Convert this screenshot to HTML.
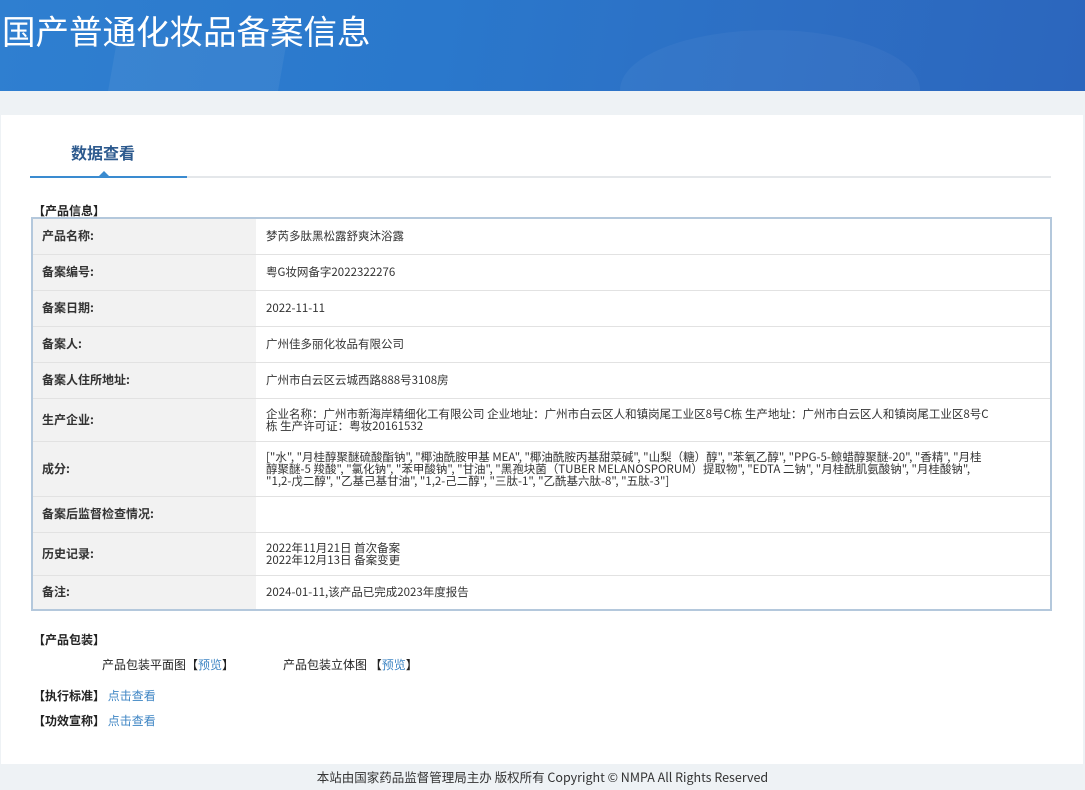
<!DOCTYPE html>
<html><head><meta charset="utf-8"><style>
*{margin:0;padding:0;box-sizing:border-box}
body{width:1085px;height:788px;background:#eef2f5;font-family:"Liberation Sans","Noto Sans CJK SC",sans-serif;position:relative;overflow:hidden;color:#333}
.hd{position:absolute;left:0;top:0;width:1085px;height:91px;background:linear-gradient(100deg,#2f7fd0 0%,#2a78cc 40%,#2d6fc4 70%,#2c66bd 100%);overflow:hidden}
.hd .b1{position:absolute;left:110px;top:40px;width:170px;height:80px;background:rgba(255,255,255,.06);transform:skewX(-10deg)}
.hd .b2{position:absolute;left:620px;top:30px;width:300px;height:120px;border-radius:50%;background:rgba(255,255,255,.04)}
.hd h1{position:absolute;left:2px;top:5px;font-size:33.5px;font-weight:normal;color:#fff;font-family:"Noto Sans CJK SC",sans-serif}
.main{position:absolute;left:1px;top:115px;width:1082px;height:649px;background:#fff}
.tab{position:absolute;left:71px;top:140px;font-size:16px;font-weight:bold;color:#2d5a8e;font-family:"Noto Sans CJK SC",sans-serif}
.line{position:absolute;left:30px;top:176px;width:1021px;height:2px;background:#e4e7ea}
.line2{position:absolute;left:30px;top:176px;width:157px;height:2px;background:#3a8bd0}
.tri{position:absolute;left:99px;top:171px;width:0;height:0;border-left:5px solid transparent;border-right:5px solid transparent;border-bottom:5px solid #3a8bd0}
.sec{position:absolute;font-size:12px;font-weight:bold;color:#222;font-family:"Noto Sans CJK SC",sans-serif}
.wrap{position:absolute;left:31px;top:217px;width:1021px;border:2px solid #b4c8dc}
table{width:100%;border-collapse:collapse;font-size:11.5px}
td{border-top:1px solid #e2e2e2;vertical-align:middle;line-height:12px;font-family:"Noto Sans CJK SC",sans-serif}
td.l{width:223px;background:#f2f2f2;font-weight:bold;color:#333;padding-left:9px;font-size:12px}
td.v{padding-left:10px;color:#333;padding-right:60px}
a{color:#3f86c4;text-decoration:none}
.t{position:absolute;font-size:12px;color:#222;font-family:"Noto Sans CJK SC",sans-serif}
.ft{position:absolute;left:0;top:764px;width:1085px;height:24px;background:#eef2f5;text-align:center;font-size:12.5px;line-height:26px;color:#333;padding-left:0;font-family:"Noto Sans CJK SC",sans-serif}
</style></head><body>
<div class="hd"><div class="b1"></div><div class="b2"></div><h1>国产普通化妆品备案信息</h1></div>
<div class="main"></div>
<div class="tab">数据查看</div>
<div class="line"></div><div class="line2"></div><div class="tri"></div>
<div class="sec" style="left:33px;top:202px">【产品信息】</div>
<div class="wrap"><table>
<tr style="height:35px"><td class="l" style="border-top:none">产品名称:</td><td class="v" style="border-top:none">梦芮多肽黑松露舒爽沐浴露</td></tr>
<tr style="height:36px"><td class="l">备案编号:</td><td class="v">粤G妆网备字2022322276</td></tr>
<tr style="height:36px"><td class="l">备案日期:</td><td class="v">2022-11-11</td></tr>
<tr style="height:36px"><td class="l">备案人:</td><td class="v">广州佳多丽化妆品有限公司</td></tr>
<tr style="height:36px"><td class="l">备案人住所地址:</td><td class="v">广州市白云区云城西路888号3108房</td></tr>
<tr style="height:43px"><td class="l">生产企业:</td><td class="v">企业名称：广州市新海岸精细化工有限公司 企业地址：广州市白云区人和镇岗尾工业区8号C栋 生产地址：广州市白云区人和镇岗尾工业区8号C栋 生产许可证：粤妆20161532</td></tr>
<tr style="height:55px"><td class="l">成分:</td><td class="v">["水", "月桂醇聚醚硫酸酯钠", "椰油酰胺甲基 MEA", "椰油酰胺丙基甜菜碱", "山梨（糖）醇", "苯氧乙醇", "PPG-5-鲸蜡醇聚醚-20", "香精", "月桂醇聚醚-5 羧酸", "氯化钠", "苯甲酸钠", "甘油", "黑孢块菌（TUBER MELANOSPORUM）提取物", "EDTA 二钠", "月桂酰肌氨酸钠", "月桂酸钠", "1,2-戊二醇", "乙基己基甘油", "1,2-己二醇", "三肽-1", "乙酰基六肽-8", "五肽-3"]</td></tr>
<tr style="height:36px"><td class="l">备案后监督检查情况:</td><td class="v"></td></tr>
<tr style="height:43px"><td class="l">历史记录:</td><td class="v">2022年11月21日 首次备案<br>2022年12月13日 备案变更</td></tr>
<tr style="height:34px"><td class="l">备注:</td><td class="v">2024-01-11,该产品已完成2023年度报告</td></tr>
</table></div>
<div class="sec" style="left:33px;top:631px">【产品包装】</div>
<div class="t" style="left:102px;top:656px">产品包装平面图【<a>预览</a>】</div>
<div class="t" style="left:283px;top:656px">产品包装立体图 【<a>预览</a>】</div>
<div class="sec" style="left:33px;top:687px">【执行标准】 <a style="font-weight:normal">点击查看</a></div>
<div class="sec" style="left:33px;top:712px">【功效宣称】 <a style="font-weight:normal">点击查看</a></div>
<div class="ft">本站由国家药品监督管理局主办 版权所有 Copyright © NMPA All Rights Reserved</div>
</body></html>
